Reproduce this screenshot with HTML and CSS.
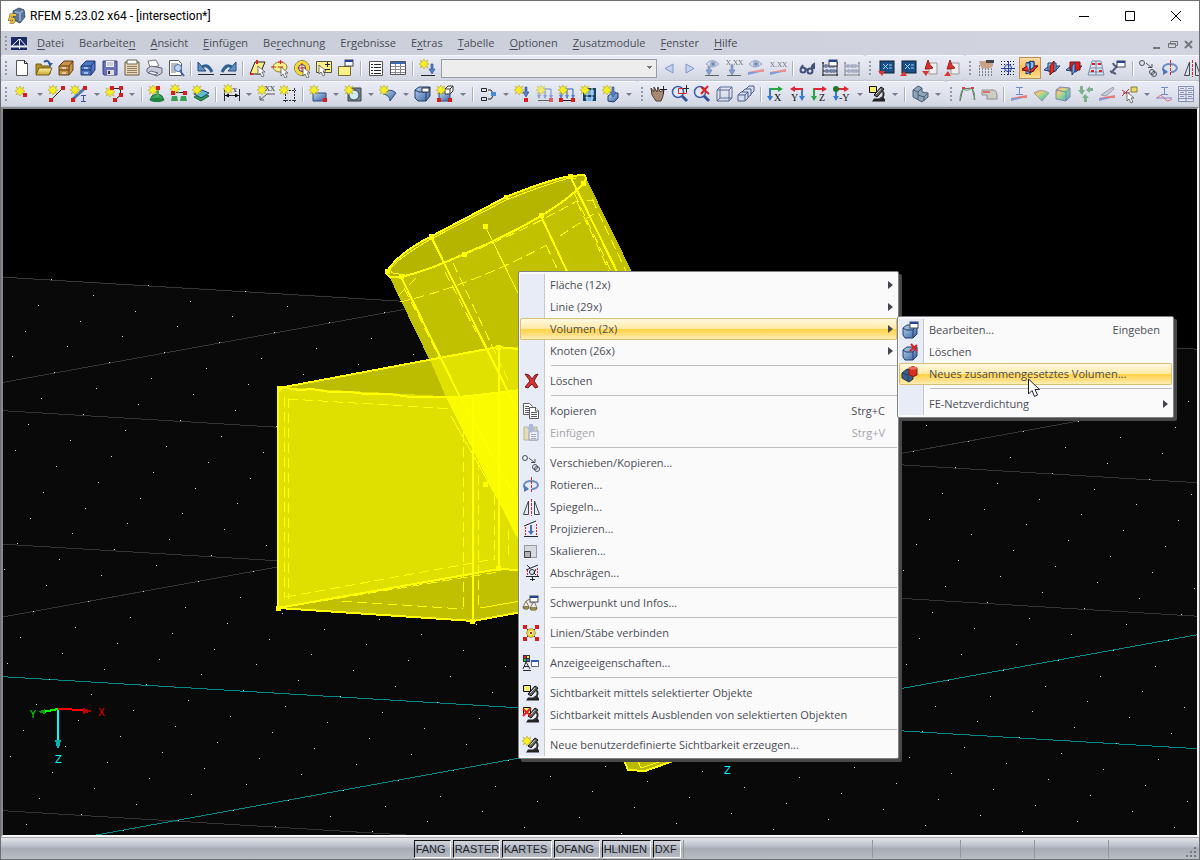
FILE: index.html
```html
<!DOCTYPE html>
<html lang="de">
<head>
<meta charset="utf-8">
<title>RFEM 5.23.02 x64 - [intersection*]</title>
<link rel="stylesheet" href="styles.css">
</head>
<body>
<svg class="defs" aria-hidden="true">
<defs>
<linearGradient id="gb" x2="1" y2="1"><stop stop-color="#b9d3f2"/><stop offset="1" stop-color="#39639f"/></linearGradient>
<linearGradient id="gy" x2="0" y2="1"><stop stop-color="#fff7a8"/><stop offset="1" stop-color="#c7a32b"/></linearGradient>
<linearGradient id="rain" x2="1" y2="1"><stop stop-color="#e34"/><stop offset=".3" stop-color="#ec3"/><stop offset=".6" stop-color="#4c7"/><stop offset="1" stop-color="#35c"/></linearGradient>
<path id="st" d="M0-5L1.500-2.500 4-4 2.500-1.500 5 0 2.500 1.500 4 4 1.500 2.500 0 5-1.500 2.500-4 4-2.500 1.500-5 0-2.500-1.500-4-4-1.500-2.500Z" fill="#f6ee22" stroke="#a99b2c" stroke-width=".5"/>
<rect id="nd" x="-2" y="-2" width="4" height="4" fill="#dc1c1c"/>
<path id="dn" d="M-1-5h2v5h2L0 5-3 0h2z" fill="#5681cf" stroke="#2a4684" stroke-width=".6"/>
<path id="cur" d="M0 0v9l2-2 2 4 2-1-2-4h3z" fill="#fff" stroke="#555" stroke-width=".8"/>
<g id="box3"><path d="M2 6l4-3h11v9l-4 5H5l-3-3z" fill="url(#gb)" stroke="#223c66"/><path d="M2 6l4 2h7l4-5M13 8v9" fill="none" stroke="#223c66"/></g>
<g id="win"><rect x="0" y="0" width="8" height="6" fill="#fff" stroke="#445"/><path d="M0 1h8" stroke="#24429a" stroke-width="2"/></g>
<g id="eye"><path d="M1 7q6-7 13 0-7 6-13 0z" fill="#d5dbea" stroke="#75809b"/><circle cx="8" cy="7" r="3" fill="#6f8fc5"/><circle cx="8" cy="7" r="1" fill="#234"/></g>
<g id="scope"><path d="M5 17.500h13v-2l-2-3-4 2H7z" fill="#222"/><path d="M7 11l7-8 3 2-7 8z" fill="#666" stroke="#111"/><path d="M15 6q4 6-2 9" fill="none" stroke="#333" stroke-width="2"/><path d="M9 10l5-5" stroke="#ccc"/></g>
<g id="movecopy" fill="none" stroke="#4c4f59"><circle cx="4" cy="5" r="2.500"/><circle cx="14" cy="14" r="2.500"/><circle cx="16" cy="16" r="2.500"/><path d="M8 5l6 5M10 9.500h4V6"/></g>
<g id="rotate" fill="none"><path d="M7 14Q2 13 3 10q1-4 7-4t7 4q-1 4-6 4" stroke="#6b8fc4" stroke-width="2"/><path d="M3 10l5 4-5 3z" fill="#4f78b5"/><path d="M10.500 2v16" stroke="#d22" stroke-dasharray="3 1"/></g>
<g id="mirror" fill="none" stroke="#454751"><path d="M7.500 4v13.500h-5zM13.500 4l5 13.500h-5z"/><path d="M10.500 2v17" stroke="#d22" stroke-dasharray="3 1"/></g>
<g id="cabinet"><path d="M3 8l5-5h9v9l-4 5H3z"/><path d="M3 8h10v9M13 8l4-5M3 12h10" fill="none"/><path d="M6 10h4M6 15h4" stroke="#fff"/></g>
<g id="planes"><path d="M6 5l8-2v10l-8 3z" fill="#7fb4ea" stroke="#173e75"/><path d="M2 11l7-3h9l-6 5z" fill="#76a9e0" stroke="#173e75"/><path d="M10 3v14" stroke="#123"/></g>
<g id="abacus"><path d="M3 4v14M17 4v14M2 17h16M2 5h2M16 5h2M3 8h14M3 13h14" fill="none"/><g stroke="none"><circle cx="6" cy="8" r="2"/><circle cx="10" cy="8" r="2"/><circle cx="13" cy="8" r="2"/><circle cx="7" cy="13" r="2"/><circle cx="11" cy="13" r="2"/><circle cx="14" cy="13" r="2"/></g></g>
<g id="support"><path d="M5 12q5-4 10 0l2 4H3z" fill="#39a158" stroke="#176632"/><path d="M9 6h3v7H9z" fill="#43ad61"/><ellipse cx="10" cy="16" rx="7" ry="2" fill="#23843f"/></g>
<g id="loads"><path d="M4 5h12M4 5v9M10 5v9M16 5v9" stroke="#345fb2" fill="none"/><path d="M2 11h4l-2 4zM8 11h4l-2 4zM14 11h4l-2 4z" fill="#5a84d2"/><path d="M3 16.500h14" stroke="#222"/></g>
<g id="lens"><circle cx="8" cy="8" r="5.500" fill="#dfe9fa" stroke="#3e5ea6" stroke-width="1.500"/><path d="M12 12l5 5" stroke="#35549d" stroke-width="3"/></g>
<g id="screen"><rect x="4" y="3" width="14" height="12" fill="#1b4f87" stroke="#123"/><path d="M7 6l5 5M12 6l-5 5M13 7h3M13 10h3" stroke="#9bd2ee"/></g>
</defs>
</svg>
<div class="app">
<header class="titlebar">
<svg class="logo" width="18" height="18" viewBox="0 0 18 18"><path d="M5 4l6-3 5 2 1 7-5 6-6-3z" fill="#5a7397" stroke="#41546f"/><path d="M7 5l5 1 3-2M12 6v8" fill="none" stroke="#8fa8c8" stroke-width="2"/><path d="M8 8H3L2 12q5-1 4 2-1 2-4 1" fill="none" stroke="#675619" stroke-width="3"/><path d="M8 8H3L2 12q5-1 4 2-1 2-4 1" fill="none" stroke="#e6c339" stroke-width="2"/></svg>
<h1>RFEM 5.23.02 x64 - [intersection*]</h1>
<div class="wincontrols">
<button aria-label="Minimieren"><svg width="12" height="12"><path d="M1 6.500h10"/></svg></button>
<button aria-label="Maximieren"><svg width="12" height="12"><path d="M1.500 1.500h9v9h-9z"/></svg></button>
<button aria-label="Schließen"><svg width="12" height="12"><path d="M1 1l10 10M11 1L1 11"/></svg></button>
</div>
</header>
<nav class="menubar">
<i class="grip"></i>
<svg class="appicon" width="16" height="13"><rect width="16" height="13" fill="#1b2b68"/><path d="M0 9.500h16" stroke="#e8ecff" stroke-width="2"/><path d="M8.500 2v10M8 2L1 9M9 2l6 7" stroke="#e8ecff" fill="none"/></svg>
<button><u>D</u>atei</button><button>Bearbeite<u>n</u></button><button><u>A</u>nsicht</button><button><u>E</u>infügen</button><button>Be<u>r</u>echnung</button><button>Er<u>g</u>ebnisse</button><button>E<u>x</u>tras</button><button><u>T</u>abelle</button><button><u>O</u>ptionen</button><button><u>Z</u>usatzmodule</button><button><u>F</u>enster</button><button><u>H</u>ilfe</button>
<div class="mdi">
<button aria-label="Fenster minimieren"><svg width="12" height="12"><path d="M2 9h7" stroke-width="2"/></svg></button>
<button aria-label="Fenster wiederherstellen"><svg width="12" height="12"><path d="M3.500 4V2.500h7v4H9M1.500 4.500h7v4h-7zM1 5h8"/></svg></button>
<button aria-label="Fenster schließen"><svg width="12" height="12"><path d="M2 2l7 7M9 2L2 9" stroke-width="2"/></svg></button>
</div>
</nav>
<div class="toolrow">
<div class="tb"><i class="grip"></i>
<button class="t" aria-label="Neu"><svg><path d="M4.500 2.500h8l3 3v12h-11z" fill="#fff" stroke="#555"/><path d="M12.500 2.500v3h3" class="k"/></svg></button>
<button class="t" aria-label="Öffnen"><svg><path d="M2 16V6h5l1 2h8v8z" fill="#b59122" stroke="#75601c"/><path d="M2 17l3-7h13l-3 7z" fill="url(#gy)" stroke="#75601c"/><path d="M10 4q4-3 6 2" fill="none" stroke="#355d9d" stroke-width="2"/><path d="M14 5h5l-3 4z" fill="#355d9d"/></svg></button>
<button class="t" aria-label="Projektmanager"><svg><use href="#cabinet" fill="#c99346" stroke="#60401b"/></svg></button>
<button class="t" aria-label="Blockmanager"><svg><use href="#cabinet" fill="#4e78c4" stroke="#1d356c"/></svg></button>
<button class="t" aria-label="Speichern"><svg><path d="M3 3h14v14H4l-1-1z" fill="#6970bd" stroke="#3c4286"/><path d="M6 3h8v6H6z" fill="#f1f2fb"/><path d="M7 5h6M7 7h6" stroke="#a4a8c9"/><path d="M7 12h7v5H7z" fill="#ddd"/><path d="M8 13h2v3H8z" fill="#333"/></svg></button>
<button class="t" aria-label="Zwischenablage"><svg><path d="M3 4h14v13H3z" fill="#ead8b5" stroke="#6c5a44"/><path d="M5 2h10v4H5z" fill="#fff" stroke="#665"/><path d="M5 8.500h10M5 10.500h10M5 12.500h10M5 14.500h10" stroke="#8e7f68"/></svg></button>
<button class="t" aria-label="Drucken"><svg><path d="M6 9l-2-6 8-1 3 6z" fill="#fff" stroke="#777"/><path d="M3 11l4-3 11 2v5l-5 3-10-4z" fill="#c8cbd8" stroke="#62657a"/><path d="M7 13l7 2-3 2-7-2z" fill="#eef" stroke="#62657a"/></svg></button>
<button class="t" aria-label="Druckvorschau"><svg><path d="M3.500 2.500h9l3 3v12h-12z" fill="#fff" stroke="#555"/><path d="M5 6h7M5 8h5M5 10h4M5 12h4M5 14h5" stroke="#777"/><circle cx="12" cy="10" r="3.500" fill="#bcd4f5" stroke="#4a71b3"/><path d="M14 13l4 5" stroke="#3d63a6" stroke-width="2"/></svg></button>
<i class="sep"></i>
<button class="t" aria-label="Rückgängig"><svg><path d="M5 10q6-6 11 4" fill="none" stroke="#315f97" stroke-width="3"/><path d="M2 4v9h8z" fill="#5e8fc5" stroke="#2a4b7a"/><path d="M2 16.500h16" class="k"/></svg></button>
<button class="t" aria-label="Wiederherstellen"><svg><path d="M15 10q-6-6-11 4" fill="none" stroke="#315f97" stroke-width="3"/><path d="M18 4v9h-8z" fill="#5e8fc5" stroke="#2a4b7a"/><path d="M2 16.500h16" class="k"/></svg></button>
<i class="sep"></i>
<button class="t" aria-label="Rhomboid-Auswahl"><svg><path d="M7 4h10l-5 12H2z" fill="#faf087" stroke="#222"/><path d="M9 2v4M2 16h3" stroke="#d22" stroke-width="2"/><use href="#cur" x="10" y="8"/></svg></button>
<button class="t" aria-label="Ellipsen-Auswahl"><svg><ellipse cx="10" cy="9" rx="7" ry="5" fill="#faf087" stroke="#8c7c33"/><path d="M8 4h5M10.500 2v4M1 9h5M8 9h5" stroke="#d22"/><use href="#cur" x="11" y="9"/></svg></button>
<button class="t" aria-label="Kreis-Auswahl"><svg><circle cx="10" cy="10" r="7.500" fill="#fff" stroke="#8c7c33"/><circle cx="10" cy="10" r="5.500" fill="#fff" stroke="#f2d82c" stroke-width="3"/><circle cx="10" cy="10" r="3.500" fill="none" stroke="#333"/><path d="M10 5v9M6 10h8" stroke="#d22"/><use href="#cur" x="11" y="9"/></svg></button>
<button class="t" aria-label="Auswahl hinzufügen"><svg><path d="M2.500 3.500h15v11h-15z" fill="#faf087" stroke="#554"/><path d="M11 6.500h5M13.500 4v5M11 11.500h5" class="k"/><use href="#cur" x="5" y="7"/></svg></button>
<button class="t" aria-label="Spezielle Auswahl"><svg><path d="M2.500 8.500h12v9h-12z" fill="#faf087" stroke="#786d33"/><use href="#win" x="9" y="2"/></svg></button>
<i class="sep"></i>
<button class="t" aria-label="Navigator"><svg><path d="M3.500 3.500h13v14h-13z" fill="#fff" stroke="#555"/><path d="M5 6.500h2M5 9.500h2M5 12.500h2M5 15.500h2M8 6.500h7M8 9.500h7M8 12.500h7M8 15.500h7" class="k"/></svg></button>
<button class="t" aria-label="Tabellen"><svg><path d="M2.500 3.500h15v13h-15z" fill="#fff" stroke="#555"/><path d="M3 5h14" stroke="#3a68b3" stroke-width="2"/><path d="M3 8.500h14M3 11.500h14M3 14.500h14M7.500 6v10M12.500 6v10" stroke="#888"/></svg></button>
<i class="sep"></i>
<button class="t" aria-label="Neuer Lastfall"><svg><use href="#st" x="6" y="6"/><use href="#dn" x="14" y="11"/><path d="M3 17.500h14" class="k"/></svg></button>
<select class="combo" aria-label="Lastfall"><option></option></select>
<button class="t nar" aria-label="Vorheriger"><svg><path d="M14 6v9l-8-4.500z" fill="#c4d2ee" stroke="#7e97ca"/></svg></button>
<button class="t nar" aria-label="Nächster"><svg><path d="M6 6v9l8-4.500z" fill="#c4d2ee" stroke="#7e97ca"/></svg></button>
<button class="t" aria-label="Lasten anzeigen"><svg class="dim"><use href="#dn" x="7" y="12"/><use href="#eye" x="3" y="-1"/><path d="M3 17.500h14" class="k"/></svg></button>
<button class="t" aria-label="Lastwerte anzeigen"><svg class="dim"><text x="2" y="7">X.XX</text><use href="#dn" x="8" y="12"/><path d="M3 17.500h14" class="k"/></svg></button>
<button class="t" aria-label="Ergebnisse anzeigen"><svg class="dim"><use href="#eye" x="2" y="-1"/><path d="M2 14h16v-3z" fill="#e66"/><path d="M2 14v3l12-3z" fill="#57c"/></svg></button>
<button class="t" aria-label="Ergebniswerte anzeigen"><svg class="dim"><text x="2" y="9">X.XX</text><path d="M2 14h16v-3z" fill="#e66"/><path d="M2 14v3l12-3z" fill="#57c"/></svg></button>
<i class="sep"></i>
<button class="t" aria-label="Ansicht prüfen"><svg fill="none" stroke="#41517b" stroke-width="2"><circle cx="5" cy="12" r="2.500"/><circle cx="12" cy="13" r="2.500"/><path d="M7 11l3 1M3 10l2-3M14 11q-1-3 2-5v5"/></svg></button>
<button class="t" aria-label="Berechnen"><svg><use href="#abacus" stroke="#222" fill="#7181a8"/><use href="#win" x="9" y="2"/></svg></button>
<button class="t" aria-label="Alle berechnen"><svg class="dim"><use href="#abacus" stroke="#555" fill="#8894b3"/></svg></button>
</div>
<div class="tb"><i class="grip"></i>
<button class="t" aria-label="Export"><svg><use href="#screen"/><path d="M2 13h7l-3 5z" fill="#df3434"/></svg></button>
<button class="t" aria-label="Import"><svg><use href="#screen"/><path d="M2 18h7l-3-5z" fill="#df3434"/></svg></button>
<button class="t" aria-label="PDF Export"><svg><path d="M9 5h8v11H9z" fill="#eee" stroke="#999"/><path d="M5 11l3-9q1 5 5 8l-5 1z" fill="#d92b2b" stroke="#922"/><path d="M2 13h7l-3 5z" fill="#df3434"/></svg></button>
<button class="t" aria-label="PDF Import"><svg><path d="M9 5h8v11H9z" fill="#eee" stroke="#999"/><path d="M5 11l3-9q1 5 5 8l-5 1z" fill="#d92b2b" stroke="#922"/><path d="M2 18h7l-3-5z" fill="#df3434"/></svg></button>
</div>
<div class="tb"><i class="grip"></i>
<button class="t" aria-label="Fang"><svg><path d="M3 8h14M3 11h14M3 14h14M3 17h14" stroke="#222" stroke-dasharray="1 2"/><path d="M3 3h14v5l-5 3-3-1-3 1-1-2z" fill="#c9a28a"/><path d="M10 2h8v3h-8z" fill="#444"/></svg></button>
<button class="t" aria-label="Raster"><svg><path d="M3 3.500h14M3 6.500h14M3 13.500h14M3 16.500h14" stroke="#222" stroke-dasharray="1 2"/><circle cx="10" cy="10" r="3.500" fill="none" stroke="#2a3fa8"/><path d="M10.500 3v14M3 10.500h14" stroke="#2a3fa8"/></svg></button>
<button class="t on" aria-label="Arbeitsebene XY"><svg><use href="#planes"/><path d="M2 12l5-4h11l-6 6z" fill="#ea2b22" stroke="#711"/><path d="M10 3l4 1v5l-4 3zM6 5h4v10" fill="#8cbcec" stroke="#123a70"/></svg></button>
<button class="t" aria-label="Arbeitsebene YZ"><svg><path d="M2 12l5-4h11l-6 6z" fill="#76a9e0" stroke="#173e75"/><path d="M6 5h8v8H6z" fill="#8cbcec" stroke="#173e75"/><path d="M8 8l4-5v10l-4 4z" fill="#ea2b22" stroke="#711"/></svg></button>
<button class="t" aria-label="Arbeitsebene XZ"><svg><path d="M2 12l5-4h11l-6 6z" fill="#76a9e0" stroke="#173e75"/><path d="M6 4h10v8H6z" fill="#ea1b18" stroke="#711"/><path d="M8 8l3-4v9l-3 4z" fill="#76a9e0" stroke="#173e75"/></svg></button>
<button class="t" aria-label="Hilfslinien"><svg><path d="M6 3h9l3 14H2zM4 10h13M10 3v14M5 6h11M3 14h14" fill="#dde7f3" stroke="#7b8ba8"/><path d="M6 6h3M12 6h3M5 13h3M13 13h3" stroke="#d22" stroke-width="2"/></svg></button>
<button class="t" aria-label="Optionen"><svg><path d="M3 15l7-8M5 5q1 4 5 3M2 13l6 3" fill="none" stroke="#56617d" stroke-width="2"/><use href="#win" x="9" y="3"/></svg></button>
<i class="sep"></i>
<button class="t" aria-label="Verschieben"><svg><use href="#movecopy"/></svg></button>
<button class="t" aria-label="Rotieren"><svg><use href="#rotate"/></svg></button>
<button class="t" aria-label="Spiegeln"><svg><use href="#mirror"/></svg></button>
</div>
</div>
<div class="toolrow">
<div class="tb"><i class="grip"></i>
<button class="t" aria-label="Neuer Knoten"><svg><use href="#st" x="8" y="7"/><use href="#nd" x="13" y="11"/></svg></button><button class="a" aria-label="Knotentyp"></button>
<button class="t" aria-label="Neue Linie"><svg><use href="#st" x="6" y="6"/><path d="M4 16L16 4" class="k"/><use href="#nd" x="4" y="16"/><use href="#nd" x="16" y="4"/></svg></button>
<button class="t" aria-label="Neuer Stab"><svg><path d="M4 15L16 4" stroke="#4776b9" stroke-width="3"/><use href="#st" x="6" y="6"/><use href="#nd" x="4" y="16"/><use href="#nd" x="16" y="4"/><path d="M12 11.500h5M14.500 12v5M12 17.500h5" stroke="#3d55a0" fill="none"/></svg></button><button class="a" aria-label="Stabtyp"></button>
<button class="t" aria-label="Neue Polylinie"><svg><path d="M7 4.500h9.500V11L11 16" class="k"/><use href="#st" x="6" y="8"/><use href="#nd" x="8" y="4"/><use href="#nd" x="17" y="4"/><use href="#nd" x="17" y="11"/><use href="#nd" x="11" y="16"/></svg></button><button class="a" aria-label="Linientyp"></button>
<i class="sep"></i>
<button class="t" aria-label="Neues Knotenlager"><svg><use href="#support"/><use href="#st" x="6" y="6"/><use href="#nd" x="11" y="4"/></svg></button>
<button class="t" aria-label="Neues Linienlager"><svg><path d="M4 8.500h13" class="k"/><path d="M3 12h5l1 5H2zM12 12h5l1 5h-7z" fill="#3aa058"/><use href="#st" x="6" y="5"/><use href="#nd" x="4" y="9"/><use href="#nd" x="16" y="9"/></svg></button>
<button class="t" aria-label="Neues Flächenlager"><svg><path d="M3 13l8-4 7 3-8 5z" fill="#2f9950" stroke="#176632"/><path d="M3 10l8-4 7 3-8 5z" fill="#5cbcd6" stroke="#246"/><use href="#st" x="6" y="6"/></svg></button>
<i class="sep"></i>
<button class="t" aria-label="Bemaßung"><svg><path d="M3.500 5v12M18.500 5v12M4 11.500h14" class="k"/><path d="M4 11.500l4-2v4zM18 11.500l-4-2v4z"/><use href="#st" x="7" y="5"/><text x="12" y="8">x</text></svg></button><button class="a" aria-label="Bemaßungstyp"></button>
<button class="t" aria-label="Kommentar"><svg><path d="M4 16l7-6h8M4 12v4h4" fill="none" stroke="#555"/><use href="#st" x="6" y="6"/><text x="9" y="7">XX</text></svg></button>
<button class="t" aria-label="Raster setzen"><svg><path d="M5 6.500h13M5 16.500h13M7.500 4v14M16.500 4v14" fill="none" stroke="#333" stroke-dasharray="2 1"/><use href="#st" x="6" y="6"/></svg></button>
<i class="sep"></i>
<button class="t" aria-label="Neue Fläche"><svg><path d="M5 9h13v8H5z" fill="url(#gb)" stroke="#2d4c80"/><use href="#st" x="6" y="6"/><use href="#nd" x="17" y="16"/></svg></button><button class="a" aria-label="Flächentyp"></button>
<button class="t" aria-label="Öffnung"><svg><path d="M5 4h13v13H5z" fill="#76818f" stroke="#444"/><circle cx="11" cy="11" r="5" fill="#d2e9f7" stroke="#345"/><use href="#st" x="6" y="6"/></svg></button><button class="a" aria-label="Öffnungstyp"></button>
<button class="t" aria-label="Gekrümmte Fläche"><svg><path d="M5 10q7-7 13-1l-6 8q0-6-7-7z" fill="url(#gb)" stroke="#2d4c80"/><use href="#st" x="6" y="6"/></svg></button><button class="a" aria-label="Schalentyp"></button>
<button class="t" aria-label="Volumen"><svg><use href="#box3"/><path d="M9 4h7v4H9z" fill="#fff" stroke="#334"/></svg></button>
<button class="t" aria-label="Neues Volumen"><svg><path d="M4 9h11v8H4z" fill="url(#gb)" stroke="#2d4c80"/><path d="M10 5h5v5h-5zM10 5l3-3h5v5l-3 3M15 5l3-3" fill="#fff" stroke="#333"/><use href="#st" x="6" y="6"/><use href="#nd" x="4" y="16"/><use href="#nd" x="15" y="16"/></svg></button><button class="a" aria-label="Volumentyp"></button>
<i class="sep"></i>
<button class="t" aria-label="Verbindung"><svg><path d="M3.500 4.500h5v3h-5zM3.500 13.500h5v3h-5zM10 6h3l2 3M10 15h3l2-3" class="k"/><path d="M13 8h5v4h-5z" fill="#4a8ad4"/></svg></button><button class="a" aria-label="Verbindungstyp"></button>
<button class="t" aria-label="Knotenlast"><svg><use href="#st" x="6" y="6"/><use href="#dn" x="13" y="8"/><use href="#nd" x="13" y="16"/></svg></button>
<button class="t" aria-label="Stablast"><svg class="dim"><use href="#loads"/><use href="#st" x="6" y="6"/><use href="#nd" x="16" y="16"/></svg></button>
<button class="t" aria-label="Linienlast"><svg><use href="#loads"/><use href="#st" x="6" y="6"/><use href="#nd" x="4" y="16"/><use href="#nd" x="16" y="16"/></svg></button>
<button class="t" aria-label="Flächenlast"><svg><path d="M4 4h13v13H4z" fill="#1c405f"/><path d="M6 6h9v5H6zM6 13h9l-2 4H8z" fill="#7bb1e4"/><path d="M8 4v13M13 4v13" stroke="#bfe0ff"/><use href="#st" x="6" y="6"/></svg></button>
<button class="t" aria-label="Volumenlast"><svg><path d="M7 12l4-3h6v5l-4 4-6-1z" fill="url(#gb)" stroke="#223c66"/><use href="#dn" x="12" y="8"/><use href="#st" x="6" y="6"/></svg></button><button class="a" aria-label="Lasttyp"></button>
</div>
<div class="tb"><i class="grip"></i>
<button class="t" aria-label="Ansicht verschieben"><svg><path d="M3 4l3 4V3l3 5 1-5 2 5 4-3-1 7-2 5H8l-4-6z" fill="#a88a72" stroke="#4c3e35"/><path d="M15.500 2v8M12 5.500h7" class="k"/></svg></button>
<button class="t" aria-label="Zoom Fenster"><svg><use href="#lens"/><path d="M8.500 4.500h8v5h-8z" fill="none" stroke="#d22"/><path d="M16.500 1v7M13 4.500h6" class="k"/></svg></button>
<button class="t" aria-label="Zoom alles"><svg><use href="#lens"/><path d="M9 3l8 7M16 2l-7 8" stroke="#d22" stroke-width="2"/></svg></button>
<button class="t" aria-label="Drahtmodell"><svg><path d="M3 6l3-3h12v11l-3 3H3zM3 6h12v11M15 6l3-3M6 3v11l-3 3M6 14h12" fill="none" stroke="#5b6d95"/></svg></button>
<button class="t" aria-label="Ansichten"><svg fill="#d6def0" stroke="#4d5f88"><path d="M10 5l3-3h5v5l-3 3h-5z"/><path d="M6 8l3-3h6v6l-3 2H6z"/><path d="M2 11h7v6H2zM2 11l3-3h7v6l-3 3M9 11l3-3"/></svg></button>
<i class="sep"></i>
<button class="t" aria-label="Ansicht X"><svg><path d="M4 4v9" stroke="#347ad5" stroke-width="2"/><path d="M1 12h6l-3 5z" fill="#347ad5"/><path d="M4 5h9" stroke="#28a646" stroke-width="2"/><path d="M12 2v6l5-3z" fill="#28a646"/><text class="big" x="8" y="17">X</text></svg></button>
<button class="t" aria-label="Ansicht Y"><svg><path d="M14 4v9" stroke="#347ad5" stroke-width="2"/><path d="M11 12h6l-3 5z" fill="#347ad5"/><path d="M6 5h9" stroke="#df2636" stroke-width="2"/><path d="M7 2v6L2 5z" fill="#df2636"/><text class="big" x="3" y="17">Y</text></svg></button>
<button class="t" aria-label="Ansicht Z"><svg><path d="M4 4v9" stroke="#28a646" stroke-width="2"/><path d="M1 12h6l-3 5z" fill="#28a646"/><path d="M4 5h9" stroke="#df2636" stroke-width="2"/><path d="M12 2v6l5-3z" fill="#df2636"/><text class="big" x="9" y="17">Z</text></svg></button>
<button class="t" aria-label="Ansicht -Y"><svg><path d="M4 4v9" stroke="#347ad5" stroke-width="2"/><path d="M1 12h6l-3 5z" fill="#347ad5"/><path d="M4 5h9" stroke="#df2636" stroke-width="2"/><path d="M12 2v6l5-3z" fill="#df2636"/><circle cx="4" cy="5" r="3" fill="#1d7a2c"/><text class="big" x="7" y="17">-Y</text></svg></button><button class="a" aria-label="Ansichtstyp"></button>
<button class="t" aria-label="Sichtbarkeit"><svg><use href="#scope"/><path d="M2.500 2.500h7v6h-7z" fill="#f8f06b" stroke="#111"/></svg></button><button class="a" aria-label="Sichtbarkeitstyp"></button>
<i class="sep"></i>
<button class="t" aria-label="Rendern"><svg><path d="M3 6l5-4 4 2v4l6 1v4l-6 5-9-5z" fill="#8fa3b9" stroke="#4a5d75"/><path d="M3 6l5 2v7M8 8l4-4M8 11l6 2 4-4M14 13v4" fill="none" stroke="#4a5d75"/></svg></button><button class="a" aria-label="Rendertyp"></button>
</div>
<div class="tb"><i class="grip"></i>
<button class="t" aria-label="Verformung"><svg fill="none"><path d="M3 17L6 5l9-1 3 12" stroke="#666"/><path d="M3 17Q3 8 6 5q4 3 9-1 4 5 2 12" stroke="#5a9c60"/><path d="M5 4h3M14 4h3" stroke="#c44" stroke-width="2"/></svg></button>
<button class="t" aria-label="Schnittgrößen"><svg class="dim"><path d="M3 6h12q3 1 3 5v4H8v-4H3z" fill="#c6c3ad" stroke="#666"/><path d="M4 8h7" stroke="#d33" stroke-width="2"/></svg></button>
<i class="sep"></i>
<button class="t" aria-label="Stabergebnisse"><svg class="dim"><path d="M7 3.500h7M10.500 3v7M7 10.500h7" stroke="#345cb0" fill="none"/><path d="M2 14h16v-3z" fill="#e44"/><path d="M2 14v3l12-3z" fill="#57c"/></svg></button>
<button class="t" aria-label="Flächenergebnisse"><svg class="dim"><path d="M3 9q7-5 15 0l-7 8z" fill="url(#rain)" stroke="#777"/></svg></button>
<button class="t" aria-label="Volumenergebnisse"><svg class="dim"><path d="M3 6l4-3 10 1v9l-4 4-10-2z" fill="url(#rain)" stroke="#558"/><path d="M3 6l10 2 4-4M13 8v9" fill="none" stroke="#369"/></svg></button>
<button class="t" aria-label="Lagerreaktionen"><svg class="dim" fill="#489758"><path d="M5 2h3v4h2l-3 5-4-5h2zM9 14h3v4H9zM7 14l3-4 4 4zM18 4v3h-3v2l-4-3 4-4v2z"/></svg></button>
<button class="t" aria-label="Schnitte"><svg class="dim"><path d="M4 11L16 3l1 2-8 7z" fill="#b8c4dc" stroke="#777"/><path d="M2 14h16v-3z" fill="#e44"/><path d="M2 14v3l12-3z" fill="#57c"/></svg></button>
<button class="t" aria-label="Werte"><svg><path d="M3 6l7 5M10 5l-7 7M4 9h7" stroke="#b33"/><path d="M12 3h6v5h-6z" fill="#eadb69" stroke="#8a7d38"/><use href="#cur" x="8" y="8"/></svg></button><button class="a" aria-label="Wertetyp"></button>
<button class="t" aria-label="Verlauf"><svg class="dim" fill="none"><path d="M7 3.500h7M10.500 3v7M7 10.500h7" stroke="#345cb0"/><path d="M2 14h16" stroke="#55c"/><path d="M3 14q4-5 7 0t8 1" stroke="#d33"/></svg></button>
<button class="t" aria-label="Ergebnistabelle"><svg class="dim"><path d="M2.500 2.500h15v15h-15zM3 6.500h14M3 10.500h14M3 14.500h14M10 3v14" fill="#e8ecf5" stroke="#57689b"/><path d="M4 4.500h4M12 4.500h4M4 8.500h4M12 8.500h4M4 12.500h4M12 12.500h4" stroke="#57689b"/></svg></button>
</div>
</div>
<main class="stage">
<svg class="view" role="img" aria-label="Modellansicht">
<g transform="translate(-3 -109)">
<path d="M0 276L1600 372.500V2000H0z" fill="#090909"/>
<g shape-rendering="crispEdges">
<g stroke="#353535"><path d="M0 277l1600 96.500M0 410.500l1600 96.500M0 544l1600 96.500M0 810.500l1600 96.500M0 383l442-80.400M0 617.500l1131-206"/></g>
<path d="M0 676.500l1600 96.500M0 852.500l1600-291" stroke="#008b8b"/>
<path id="dots" fill="#dcdcdc"/>
<path d="M279 387L498 347h40v220l-40 50-25 4-195-13z" fill="#e0e000"/>
<path d="M279 387L498 347h40v42l-78 8z" fill="#bcbc00"/>
<path d="M278 608L498 569h40v41l-65 11z" fill="#c0c000"/>
<path d="M387 272L586 178 636 280v80H520L498 347 430 361z" fill="#c1c100"/>
<path d="M430 360l68-13h40v45l-92 5z" fill="#e1e100"/>
<path d="M446 397l92-8v190z" fill="#fafa00"/>
<path d="M387 271Q400 252 431 236.500L506 197Q545 181 570 176L584 175Q588 178 583 184 570 198 541 216 505 237 464 254 430 270 401 277H390Q386 275 387 271z" fill="#b5b500" stroke="#ff0" stroke-width="2"/>
<g fill="none" stroke="#ff0" stroke-width="2"><path d="M431 236.500L522 420M401 277L460 397M541 216L571 280M570 176L623 284M279 388L498 347 538 351M278 387V608L473 621 538 609M473 397V621M499 347V569M278 608L499 569 538 571M279 387L300 390 312 389 330 392 350 392 365 394 390 394 410 397H460L538 388"/></g>
<g fill="none" stroke="#ff0"><path d="M485 226L522 301M391 268Q400 257 431 239L506 200Q545 185 566 179L576 178M391 268Q388 275 405 274M451 416L538 570M460 397L538 538M480 608L538 598"/>
<g stroke-dasharray="10 5"><path d="M453 263L508 380M445 272L476 332M404 288L447 372M574 193L611 271M577 202L609 271M592 199L626 271M546 245L560 275M284 397V598M288 398V599M288 399L455 409M463 432V609M478 445V608M494 480V560M508 530V560M342 601L463 609M286 597L494 559M279 608L498 572M400 302Q470 286 547 245M450 260Q515 236 577 201M560 236L598 211M587 200H594M398 296L416 278"/></g></g>
<g fill="#ff0"><path d="M385 269h5v5h-5zM429 234h5v5h-5zM504 195h4v4h-4zM568 174h5v5h-5zM581 181h5v5h-5zM539 213h5v5h-5zM462 252h5v5h-5zM399 274h5v5h-5zM483 224h5v5h-5zM496 345h5v5h-5zM277 386h5v5h-5zM276 606h5v5h-5zM470 619h5v5h-5zM496 566h5v5h-5zM483 482h5v5h-5z"/></g>
<path d="M620 750l8 20 17 1 42-15z" fill="#b9b900" stroke="#ff0" stroke-width="2"/><path d="M634 752l7 16 30-10" fill="none" stroke="#ff0"/><path d="M671 762l10-4" stroke="#e88f70" stroke-width="2"/>
<path d="M727.500 740v21" stroke="#008b8b"/>
<path d="M58 709v32" stroke="#0ff" stroke-width="2"/><path d="M55 740h6l-2 8h-2z" fill="#00b4b4"/>
<path d="M58 709l-15 3" stroke="#0f0" stroke-width="2"/><path d="M45 709v5l-7-2z" fill="#00a000"/>
<path d="M58 709l27 1" stroke="#f00" stroke-width="2"/><path d="M83 708v6l10-3z" fill="#b00000"/>
</g>
<text class="ax" x="30" y="718" fill="#00e000">Y</text><text class="ax" x="98" y="716" fill="#e00000">X</text><text class="ax" x="55" y="763" fill="#0ff">Z</text><text class="ax" x="724" y="774" fill="#0ff">Z</text>
</g>
</svg>
<ul class="menu ctx" role="menu">
<li><button><i></i>Fläche (12x)<b class="sub"></b></button></li>
<li><button><i></i>Linie (29x)<b class="sub"></b></button></li>
<li class="parent"><button class="hot"><i></i>Volumen (2x)<b class="sub"></b></button>
<ul class="menu flyout" role="menu">
<li><button><i><svg><path d="M3 8l4-3h10v9l-4 4H5l-2-3z" fill="url(#gb)" stroke="#223c66"/><path d="M3 8l3 2h7l4-5M13 10v8" class="n"/><use href="#win" x="10" y="2"/></svg></i>Bearbeiten...<span class="key">Eingeben</span></button></li>
<li><button><i><svg><path d="M3 8l4-3h10v9l-4 4H5l-2-3z" fill="url(#gb)" stroke="#223c66"/><path d="M3 8l3 2h7l4-5M13 10v8" class="n"/><path d="M11 2l6 7M17 3l-7 6" stroke="#d22" stroke-width="2"/></svg></i>Löschen</button></li>
<li><button class="hot"><i><svg><path d="M2 9l5-4 6 2v8l-4 3-7-4z" fill="#39608c" stroke="#1d3455"/><path d="M2 9l6 2 4-4M8 11v6" class="n"/><path d="M9 4q4-3 8 0v7q-4 3-8 0z" fill="#d8321f" stroke="#801c11"/><ellipse cx="13" cy="4" rx="4" ry="1.500" fill="#f07060"/></svg></i>Neues zusammengesetztes Volumen...</button></li>
<li class="line"></li>
<li><button><i></i>FE-Netzverdichtung<b class="sub"></b></button></li>
</ul>
</li>
<li><button><i></i>Knoten (26x)<b class="sub"></b></button></li>
<li class="line"></li>
<li><button><i><svg><path d="M4 3l4 1 3 4 3-4 3-1-4 7 4 6-3 1-3-4-4 4-3-1 5-6z" fill="#dc3232" stroke="#6b1b1b"/></svg></i>Löschen</button></li>
<li class="line"></li>
<li><button><i><svg fill="#fff" stroke="#5c5c61"><path d="M2.500 2.500h6l3 3v8h-9z"/><path d="M4 5.500h4M4 7.500h4M4 9.500h4M4 11.500h4"/><path d="M8.500 6.500h6l3 3v8h-9z"/><path d="M10 11.500h6M10 13.500h6M10 15.500h6M14.500 6v4h3"/></svg></i>Kopieren<span class="key">Strg+C</span></button></li>
<li><button disabled><i><svg><path d="M3 4h13v13H3z" fill="#eadb9c" stroke="#a99e79"/><path d="M8 8h9v9H8z" fill="#eef1fb" stroke="#777f95"/><path d="M10 11.500h5M10 13.500h5M10 15.500h5" stroke="#8d96b0"/><path d="M8 1h4v4h3l-5 5-4-5h2z" fill="#91aadc"/></svg></i>Einfügen<span class="key">Strg+V</span></button></li>
<li class="line"></li>
<li><button><i><svg><use href="#movecopy"/></svg></i>Verschieben/Kopieren...</button></li>
<li><button><i><svg><use href="#rotate"/></svg></i>Rotieren...</button></li>
<li><button><i><svg><use href="#mirror"/></svg></i>Spiegeln...</button></li>
<li><button><i><svg><path d="M3 7l12-5M3 17.500h14" class="k"/><path d="M4.500 8v8M15.500 5v11" stroke="#d22" stroke-dasharray="2 1"/><path d="M9 6h2v6h2l-3 4-3-4h2z" fill="#4a6fb8"/></svg></i>Projizieren...</button></li>
<li><button><i><svg><path d="M3.500 4.500h12v12h-12z" fill="#d8dae2" stroke="#555" stroke-dasharray="1 1"/><path d="M3.500 10.500h6v6h-6z" fill="#b2b3ba" stroke="#444"/></svg></i>Skalieren...</button></li>
<li><button><i><svg><path d="M5 7l12-5M5 13.500h13M11.500 13v5M9 16.500h5M6 2l3 3" class="k"/><path d="M6.500 7v6M16.500 5v8" stroke="#d22" stroke-dasharray="2 1"/><circle cx="11" cy="9" r="2.500" class="k"/><path d="M15 6l-2 4 2 2" class="k"/></svg></i>Abschrägen...</button></li>
<li class="line"></li>
<li><button><i><svg><path d="M5 8l6-3M11 4v7M5 8l-3 6h6zM13 8l-4 7h7z" fill="none" stroke="#8a7c48"/><path d="M2 14h6l-1 2H3zM9 15h7l-1 2h-5z" fill="#c8b66c" stroke="#665a30"/><use href="#win" x="9" y="3"/></svg></i>Schwerpunkt und Infos...</button></li>
<li class="line"></li>
<li><button><i><svg><path d="M3 3l14 14M17 3L3 17" class="k"/><use href="#nd" x="4" y="4"/><use href="#nd" x="16" y="4"/><use href="#nd" x="4" y="16"/><use href="#nd" x="16" y="16"/><circle cx="10" cy="10" r="3" fill="#fff" stroke="#665500" stroke-width="3"/><circle cx="10" cy="10" r="3" fill="#fff" stroke="#f3d52d" stroke-width="2"/><path d="M9 9h2v2H9z" fill="#c22"/></svg></i>Linien/Stäbe verbinden</button></li>
<li class="line"></li>
<li><button><i><svg><path d="M2 2h7v7H2z" fill="#333"/><path d="M3 3h2v2H3z" fill="#e22"/><path d="M6 3h2v2H6z" fill="#ee2"/><path d="M3 6h2v2H3z" fill="#2c3"/><path d="M6 6h2v2H6z" fill="#46f"/><path d="M2 16l3-7 4 7M3 13.500h5M2 17.500h8" class="k"/><path d="M10.500 7.500h7v6h-7z" fill="#fff" stroke="#667"/><path d="M10 8h8" stroke="#345fae" stroke-width="2"/></svg></i>Anzeigeeigenschaften...</button></li>
<li class="line"></li>
<li><button><i><svg><use href="#scope"/><path d="M2.500 2.500h7v6h-7z" fill="#f8f06b" stroke="#111"/></svg></i>Sichtbarkeit mittels selektierter Objekte</button></li>
<li><button><i><svg><use href="#scope"/><path d="M2.500 2.500h7v6h-7z" fill="#f8f06b" stroke="#111"/><path d="M2 4l8 7M10 3l-8 8" stroke="#e22424" stroke-width="2"/></svg></i>Sichtbarkeit mittels Ausblenden von selektierten Objekten</button></li>
<li class="line"></li>
<li><button><i><svg><use href="#scope"/><use href="#st" x="6" y="6"/></svg></i>Neue benutzerdefinierte Sichtbarkeit erzeugen...</button></li>
</ul>
<svg class="pointer" width="14" height="20"><path d="M1.500 1v15l3.500-3.500 2.500 6 3-1.500-2.500-5.500h4.500z" fill="#fff" stroke="#1c1c2c"/></svg>
</main>
<footer class="status">
<span class="pane lead"></span>
<button class="f1">FANG</button><button class="f2">RASTER</button><button class="f3">KARTES</button><button class="f4">OFANG</button><button class="f5">HLINIEN</button><button class="f6">DXF</button>
<span class="pane mid"></span><span class="pane w1"></span><span class="pane w2"></span><span class="pane w2"></span><span class="pane w3"></span>
<svg class="resize" width="12" height="12"><path d="M8 1h2v2H8zM4 5h2v2H4zM8 5h2v2H8zM0 9h2v2H0zM4 9h2v2H4zM8 9h2v2H8z" fill="#75777d"/></svg>
</footer>
</div>
<script src="grid.js"></script>
</body>
</html>
```
FILE: styles.css
```css
* { box-sizing: border-box; }
body { margin: 0; font: 11px/16px "Open Sans", "Noto Sans", sans-serif; color: #4a4d57; }
button { font: inherit; color: inherit; background: none; border: 0; padding: 0; margin: 0; }
.defs { position: absolute; width: 0; height: 0; }
.app { display: flex; flex-direction: column; height: 100vh; border: 1px solid #6c6e72; background: #d0d4de; overflow: hidden; }

.titlebar { display: flex; align-items: center; height: 30px; padding-left: 7px; background: #fff; color: #000; flex: none; }
.titlebar h1 { margin: 0 0 0 4px; font: 400 12px/16px Roboto, sans-serif; flex: 1; }
.wincontrols { display: flex; }
.wincontrols button { display: grid; place-items: center; width: 46px; height: 30px; }
.wincontrols svg { fill: none; stroke: #000; }

.menubar { display: flex; align-items: center; height: 24px; padding-left: 2px; flex: none; background: linear-gradient(90deg, #c9cdd8, #d2d5df); }
.menubar > button { padding: 0 8px 0 7px; height: 22px; }
.menubar u { text-underline-offset: 2px; }
.appicon { margin-right: 3px; }
.mdi { display: flex; margin-left: auto; padding-top: 4px; }
.mdi button { width: 16px; height: 14px; }
.mdi svg { display: block; fill: none; stroke: #75777c; }

.grip { width: 8px; height: 14px; flex: none; background: linear-gradient(#9298a6, #9298a6) 2px 0 / 2px 4px repeat-y; mask: linear-gradient(#000 2px, transparent 2px) 0 0 / 8px 4px; }
.toolrow { display: flex; flex: none; height: 26px; overflow: hidden; }
.tb { display: flex; align-items: center; flex: none; height: 26px; padding: 0 2px; border-top: 1px solid #f7f8fc; border-bottom: 1px solid #bfc4cf; border-radius: 3px; background: linear-gradient(#e9ecf5, #e1e4ee 45%, #d1d6e1); }
.tb:last-child { flex: 1 0 auto; }
.t { width: 22px; height: 22px; flex: none; padding: 1px; }
.nar { width: 21px; padding: 1px 0; }
.t svg, .menu svg { display: block; width: 20px; height: 20px; }
.on { background: linear-gradient(#fce0ae, #ffba53 50%, #ffe59a); box-shadow: inset 0 0 0 1px #bd9155; }
.dim { opacity: .65; }
.k { fill: none; stroke: #25262b; }
.n { fill: none; stroke: #223c66; }
.t text { font: 7px "DejaVu Serif", serif; fill: #333; }
.t text.big { font: 10px "Liberation Serif", serif; fill: #111; }
.sep { width: 8px; height: 15px; flex: none; background: linear-gradient(90deg, transparent 3px, #aab0bd 3px, #aab0bd 4px, #fff 4px, #fff 5px, transparent 5px); }
.a { width: 13px; height: 22px; flex: none; }
.a::before { content: ""; display: block; margin: 1px auto 0; width: 0; border: 3px solid transparent; border-top-color: #777d8b; border-bottom: 0; }
.combo { appearance: none; width: 216px; height: 19px; margin: 0 2px; flex: none; border: 1px solid #999ca4; border-radius: 0; background: linear-gradient(#777, #777) right 4px top 6px / 5px 1px no-repeat, linear-gradient(#777, #777) right 5px top 7px / 3px 1px no-repeat, linear-gradient(#777, #777) right 6px top 8px / 1px 1px no-repeat, #ededed; }

.stage { position: relative; flex: 1; min-height: 0; border: 2px solid; border-color: #888b90 #f4f4f4 #f8f8f8 #85878c; background: #000; }
.view { display: block; width: 100%; height: 100%; overflow: hidden; }
.ax { font: 10px "DejaVu Sans", sans-serif; }

.menu { position: absolute; margin: 0; padding: 2px 1px; list-style: none; border: 1px solid #7f8186; border-radius: 2px; background: linear-gradient(90deg, #e8ecf7 24px, #c6c8ce 24px, #c6c8ce 25px, #fafafa 25px) content-box, #fafafa; box-shadow: 3px 3px 0 #484848; }
.ctx { left: 515px; top: 162px; width: 381px; }
.flyout { left: 377px; top: -2px; width: 277px; z-index: 2; }
.parent { position: relative; }
.menu button { display: flex; align-items: center; width: 100%; height: 22px; padding: 0 12px 0 1px; text-align: left; }
.menu i { width: 20px; margin-right: 9px; flex: none; }
.menu button:disabled { color: #a3a4aa; }
.menu button:disabled svg { opacity: .75; }
.key { margin-left: auto; }
.menu .sub { margin: 0 -8px 0 auto; border: 4px solid transparent; border-left: 5px solid #424650; border-right: 0; }
.menu .hot { background: linear-gradient(#fffbe9, #ffe9a5 48%, #ffd23f 50%, #ffe18a 80%, #fff3c4); box-shadow: inset 0 0 0 1px #d9be74; border-radius: 2px; }
.line { height: 8px; margin-left: 31px; border-top: 3px solid transparent; }
.line::before { content: ""; display: block; height: 1px; background: #bcbdc1; }
.pointer { position: absolute; left: 1024px; top: 269px; z-index: 3; }

.status { position: relative; display: flex; align-items: stretch; flex: none; height: 22px; padding: 2px 0 1px; border-top: 1px solid #a3a5a9; background: linear-gradient(#e2e4e8, #b9beca 40%, #a7acb5 50%, #b9bdc4); font: 11px/14px "Liberation Sans", sans-serif; color: #22242c; }
.status button { border: 1px solid; border-color: #111 #fff #fff #111; text-align: left; padding: 0 1px; margin-right: 2px; flex: none; }
.f1 { width: 37px; }
.f2 { width: 47px; }
.f3 { width: 50px; }
.f4 { width: 46px; }
.f5 { width: 49px; }
.f6 { width: 28px; }
.pane { border-right: 1px solid #93969c; }
.lead { flex: 414; border: 0; }
.mid { flex: 189; border-left: 1px solid #93969c; }
.w1 { width: 88px; }
.w2 { width: 74px; }
.w3 { width: 90px; border: 0; }
.resize { position: absolute; right: 1px; bottom: 1px; }
```
FILE: grid.js
```js
// Snap points of the work plane: an oblique lattice below the horizon edge.
const a = [96.96, 5.87], b = [55, -10], origin = [51.3, 279.3];
let d = "";
for (let m = -30; m < 60; m++) {
  for (let n = -80; n <= 60; n++) {
    const x = Math.floor(origin[0] + m * a[0] + n * b[0]);
    const y = Math.floor(origin[1] + m * a[1] + n * b[1]);
    if (x < 3 || x > 1600 || y > 1200 || y < 275.5 + x * 0.0603) continue;
    d += `M${x} ${y}h1v1h-1z`;
  }
}
document.getElementById("dots").setAttribute("d", d);
```
